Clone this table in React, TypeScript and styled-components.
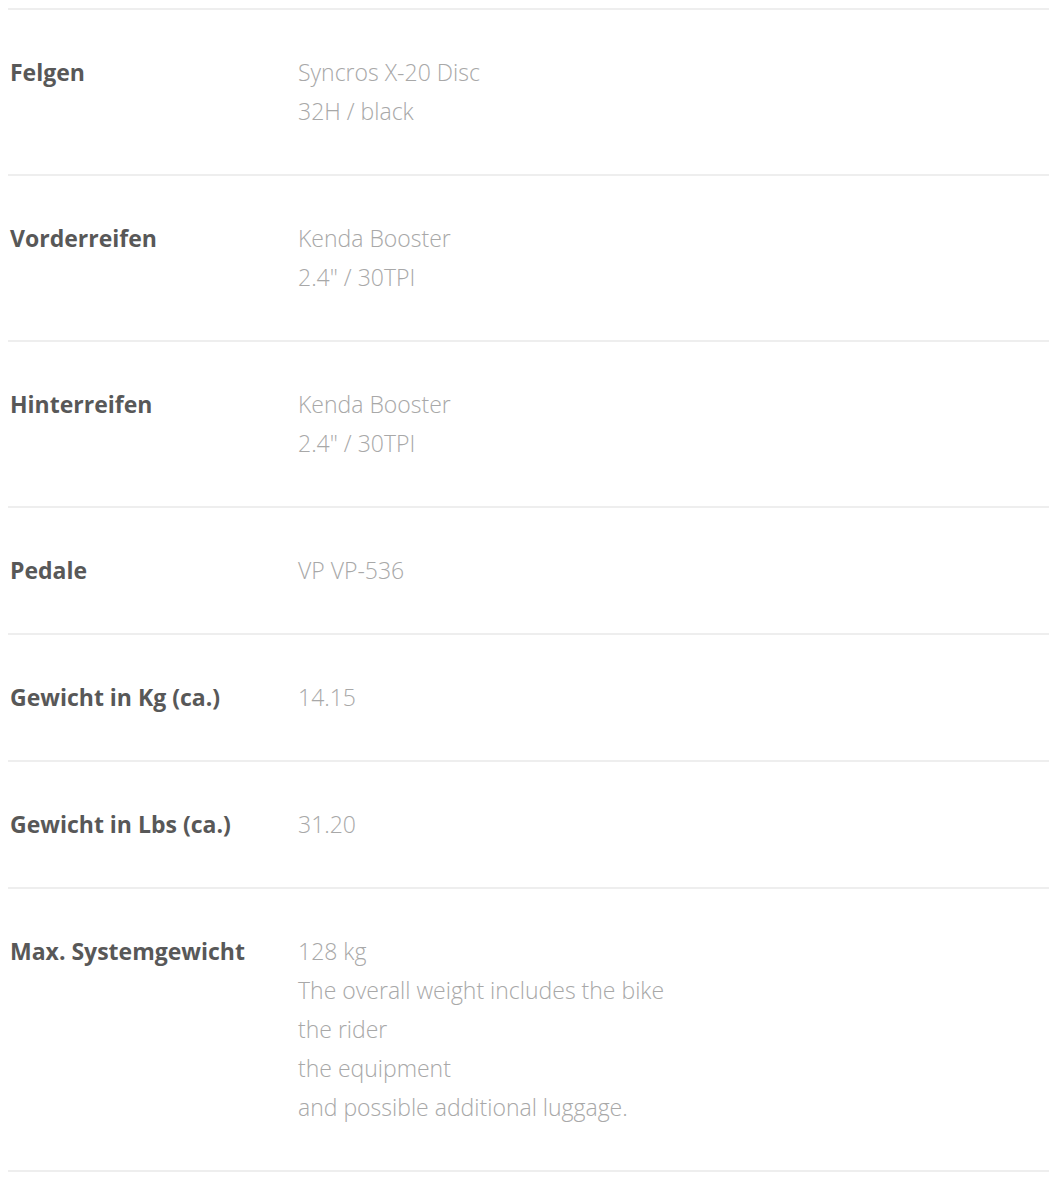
import React from "react";
import styled, { createGlobalStyle } from "styled-components";

const Global = createGlobalStyle`
  html, body { margin: 0; padding: 0; background: #ffffff; }
  body { font-family: "Open Sans", "Liberation Sans", Arial, sans-serif; }
`;

const Table = styled.div`
  margin: 8px 0 0 8px;
  border-top: 2px solid #eeeeee;
`;

const Row = styled.div`
  display: grid;
  grid-template-columns: 288px 1fr;
  padding: 43px 0 43px 2px;
  border-bottom: 2px solid #eeeeee;
`;

const Label = styled.div`
  font-size: 23px;
  line-height: 39px;
  font-weight: 700;
  color: #585858;
`;

const Values = styled.div`
  display: flex;
  flex-direction: column;
`;

const Value = styled.div`
  font-size: 23px;
  line-height: 39px;
  font-weight: 300;
  color: #a8a8a8;
  white-space: nowrap;
`;

const specs: { label: string; values: string[] }[] = [
  { label: "Felgen", values: ["Syncros X-20 Disc", "32H / black"] },
  { label: "Vorderreifen", values: ["Kenda Booster", "2.4\" / 30TPI"] },
  { label: "Hinterreifen", values: ["Kenda Booster", "2.4\" / 30TPI"] },
  { label: "Pedale", values: ["VP VP-536"] },
  { label: "Gewicht in Kg (ca.)", values: ["14.15"] },
  { label: "Gewicht in Lbs (ca.)", values: ["31.20"] },
  {
    label: "Max. Systemgewicht",
    values: [
      "128 kg",
      "The overall weight includes the bike",
      "the rider",
      "the equipment",
      "and possible additional luggage.",
    ],
  },
];

export default function App() {
  return (
    <>
      <Global />
      <Table>
        {specs.map((s) => (
          <Row key={s.label}>
            <Label>{s.label}</Label>
            <Values>
              {s.values.map((v, i) => (
                <Value key={i}>{v}</Value>
              ))}
            </Values>
          </Row>
        ))}
      </Table>
    </>
  );
}
